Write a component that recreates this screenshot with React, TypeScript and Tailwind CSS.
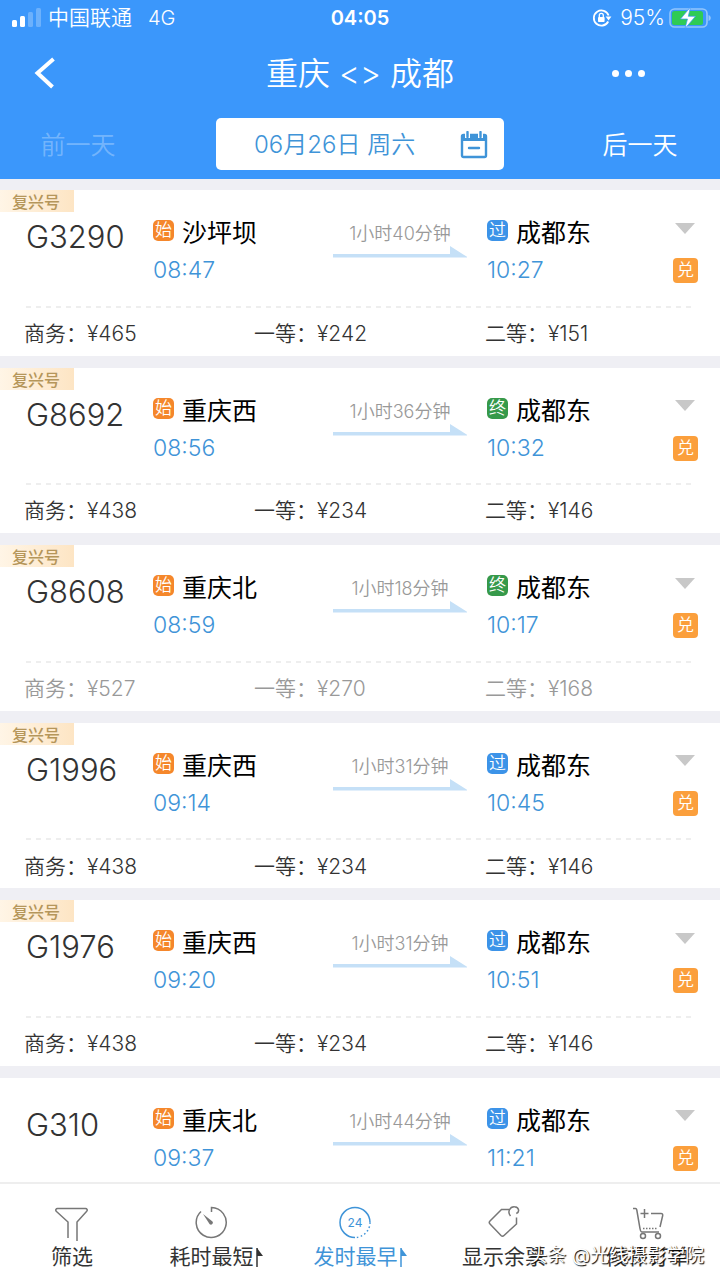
import React from 'react';

type StopKind = 'start' | 'pass' | 'end';

interface Train {
  no: string;
  from: string;
  depart: string;
  duration: string;
  to: string;
  toKind: StopKind;
  arrive: string;
  fuxing?: boolean;
  soldOut?: boolean;
  prices?: [string, string, string];
}

const trains: Train[] = [
  { no: 'G3290', from: '沙坪坝', depart: '08:47', duration: '1小时40分钟', to: '成都东', toKind: 'pass', arrive: '10:27', fuxing: true, prices: ['465', '242', '151'] },
  { no: 'G8692', from: '重庆西', depart: '08:56', duration: '1小时36分钟', to: '成都东', toKind: 'end', arrive: '10:32', fuxing: true, prices: ['438', '234', '146'] },
  { no: 'G8608', from: '重庆北', depart: '08:59', duration: '1小时18分钟', to: '成都东', toKind: 'end', arrive: '10:17', fuxing: true, soldOut: true, prices: ['527', '270', '168'] },
  { no: 'G1996', from: '重庆西', depart: '09:14', duration: '1小时31分钟', to: '成都东', toKind: 'pass', arrive: '10:45', fuxing: true, prices: ['438', '234', '146'] },
  { no: 'G1976', from: '重庆西', depart: '09:20', duration: '1小时31分钟', to: '成都东', toKind: 'pass', arrive: '10:51', fuxing: true, prices: ['438', '234', '146'] },
  { no: 'G310', from: '重庆北', depart: '09:37', duration: '1小时44分钟', to: '成都东', toKind: 'pass', arrive: '11:21' },
];

const seats = ['商务', '一等', '二等'];

const stopBadges = {
  start: { text: '始', color: 'bg-[#f5872b]' },
  pass: { text: '过', color: 'bg-[#3c93e8]' },
  end: { text: '终', color: 'bg-[#36994a]' },
};

const StatusBar: React.FC = () => (
  <div className="grid h-9 grid-cols-3 items-center px-3 text-xl">
    <div className="flex items-center">
      <svg width="30" height="20" viewBox="0 0 30 20" fill="#fff" aria-hidden="true">
        <rect x="0" y="12" width="5" height="7" rx="1.5" />
        <rect x="8" y="8" width="5" height="11" rx="1.5" />
        <rect x="16" y="4" width="5" height="15" rx="1.5" opacity=".25" />
        <rect x="24" y="0" width="5" height="19" rx="1.5" opacity=".25" />
      </svg>
      <span className="ml-1.5 text-[21px] font-[350]">中国联通</span>
      <span className="ml-4 font-[350]">4G</span>
    </div>
    <span className="text-center font-semibold">04:05</span>
    <div className="flex items-center justify-end">
      <svg width="20" height="20" viewBox="0 0 20 20" fill="none" stroke="#fff" strokeWidth="1.8" aria-hidden="true">
        <path d="M16.2 13.5A7.6 7.6 0 1 1 16.6 7.5" />
        <path d="M13.6 8.6h5.8l-2.8 4z" fill="#fff" stroke="none" />
        <rect x="6" y="9" width="6.600" height="5" rx=".8" fill="#fff" stroke="none" />
        <path d="M7.3 9V7.4a2 2 0 0 1 4 0V9" strokeWidth="1.3" />
      </svg>
      <span className="ml-2 text-[21px] font-[350]">95%</span>
      <svg className="ml-1 -mr-1" width="43" height="22" viewBox="0 0 43 22" aria-hidden="true">
        <rect x="1" y="2" width="37" height="18" rx="4.5" fill="none" stroke="#fff" strokeOpacity=".45" strokeWidth="1.6" />
        <path d="M39.5 8v6c3-.8 3-5.200 0-6z" fill="#fff" opacity=".45" />
        <rect x="3" y="4" width="31" height="14" rx="2.500" fill="#2fcb55" />
        <path d="M21.500 0 11.500 12h7L16 21.500 26.500 9.300h-7.200z" fill="#fff" stroke="#3b97fb" strokeWidth=".7" />
      </svg>
    </div>
  </div>
);

const StopBadge: React.FC<{ kind: StopKind }> = ({ kind }) => (
  <span className={`flex size-[21px] items-center justify-center rounded-[5px] text-[17px] leading-none font-[350] text-white ${stopBadges[kind].color}`}>
    {stopBadges[kind].text}
  </span>
);

const Stop: React.FC<{ kind: StopKind; name: string; time: string }> = ({ kind, name, time }) => (
  <div>
    <div className="flex items-start gap-2 pt-1.5">
      <StopBadge kind={kind} />
      <span className="text-[25px] leading-[26px] text-black">{name}</span>
    </div>
    <div className="pt-1.5 text-[23px] leading-9 font-[350] text-[#3f94d8]">{time}</div>
  </div>
);

const TrainCard: React.FC<{ train: Train }> = ({ train }) => (
  <li className={`relative flex flex-col bg-white ${train.prices ? 'flex-1' : 'h-[104px]'}`}>
    {train.fuxing && (
      <span className="absolute top-0 left-0 h-[22px] w-[74px] bg-linear-to-r from-[#fff5e6] to-[#fde5c4] pl-3 text-base leading-6 font-medium text-[#b5965a]">
        复兴号
      </span>
    )}
    <div className="grid grid-cols-[127fr_180fr_154fr_186fr_47fr] pt-6 pl-[26px]">
      <div className="text-[31px] leading-[46px] font-[350] text-[#333]">{train.no}</div>
      <Stop kind="start" name={train.from} time={train.depart} />
      <div className="pt-2">
        <div className="pr-5 text-center text-lg leading-6 font-[350] text-[#999]">{train.duration}</div>
        <svg className="block" width="134" height="12" viewBox="0 0 134 12" fill="#c5e0f7" aria-hidden="true">
          <path d="M0 8h117V0l18 11.500H0z" />
        </svg>
      </div>
      <Stop kind={train.toKind} name={train.to} time={train.arrive} />
      <div className="flex flex-col items-start">
        <button type="button" aria-label={`展开 ${train.no}`} className="flex h-7 w-6 items-center justify-center">
          <svg width="20" height="11" viewBox="0 0 20 11" fill="#c8c8c8">
            <path d="M0 0h20L10 11z" />
          </svg>
        </button>
        <span className="mt-4 flex size-[25px] items-center justify-center rounded-sm bg-[#fb9f3c] text-[17px] leading-none font-[350] text-white">兑</span>
      </div>
    </div>
    {train.prices && (
      <div className="mt-auto">
        <svg className="mx-6 block h-0.5 w-[calc(100%-48px)]" aria-hidden="true">
          <line x1="2" y1="1" x2="100%" y2="1" stroke="#e9e9e9" strokeWidth="1.500" strokeDasharray="5 5" />
        </svg>
        <div className={`grid h-12 grid-cols-[230fr_231fr_235fr] items-center pt-1 pl-6 text-[21px] font-[350] ${train.soldOut ? 'text-[#999]' : 'text-[#333]'}`}>
          {train.prices.map((price, i) => (
            <span key={seats[i]}>{seats[i]}：¥{price}</span>
          ))}
        </div>
      </div>
    )}
  </li>
);

/* Half arrow after a sortable tab */
const SortMark: React.FC = () => (
  <svg width="7" height="19" viewBox="0 0 7 19" aria-hidden="true">
    <path d="M1 0v19" stroke="currentColor" strokeWidth="1.500" />
    <path d="M1 0l6 8H1z" fill="currentColor" />
  </svg>
);

const tabs = [
  {
    label: '筛选',
    icon: (
      <path d="M13 33V17L1.500 6.500C0 5 1 3.500 2.500 3.500h28c1.500 0 2.500 1.500 1 3L22 17v19" />
    ),
  },
  {
    label: '耗时最短',
    sort: true,
    icon: (
      <>
        <path d="M17.500 7V2.500A15 15 0 1 1 7 6.500" />
        <path d="M9 9l9.500 7.500a2 2 0 0 1-2.800 2.800z" fill="currentColor" stroke="none" />
      </>
    ),
  },
  {
    label: '发时最早',
    sort: true,
    active: true,
    icon: (
      <>
        <path d="M17 32.500A15 15 0 1 1 32 17.500" />
        <path d="M32 17.500A15 15 0 0 1 17 32.500" strokeDasharray="1.500 2.500" />
        <text x="17" y="22" textAnchor="middle" fontSize="12" fill="currentColor" stroke="none">24</text>
      </>
    ),
  },
  {
    label: '显示余票',
    icon: (
      <>
        <path d="M22 4.500h-7.500L3 16q-1.500 1.500 0 3l11 11.500q1.500 1.500 3 0L29.500 19v-6.500" />
        <path d="M23.500 11C20 7 23 1.500 27.500 1.800c4.500.2 5.500 5.200 1.800 6.700" />
      </>
    ),
  },
  {
    label: '候补订单',
    icon: (
      <>
        <path d="M2 3.500h2.500q1 0 1.300 1.500L9 23.500q.5 3.500 2 3.500h17" />
        <path d="M20 8.500h10q2 0 1.700 2L29 22" />
        <path d="M13.500 4v9M9.500 8.500h8" />
        <path d="M12 23.500h15" strokeDasharray="1.500 1.500" />
        <circle cx="12" cy="31" r="2.500" />
        <circle cx="27" cy="31" r="2.500" />
      </>
    ),
  },
];

export default function App() {
  return (
    <div className="flex min-h-screen flex-col bg-[#efeff4] font-['Inter','Noto_Sans_CJK_SC',sans-serif]">
      <header className="bg-[#3b97fb] pb-[9px] text-white">
        <StatusBar />
        <div className="grid h-[74px] grid-cols-[120fr_480fr_120fr] items-center">
          <button type="button" aria-label="返回" className="flex h-12 items-center pl-[34px]">
            <svg width="22" height="32" viewBox="0 0 22 32" fill="none" stroke="#fff" strokeWidth="4">
              <path d="M19.500 2 3.500 16l15 14" />
            </svg>
          </button>
          <h1 className="pt-0.5 text-center text-[32px] font-[350]">重庆 &lt;&gt; 成都</h1>
          <button type="button" aria-label="更多" className="flex h-12 items-center gap-1.5 pl-3">
            <i className="size-[7px] rounded-full bg-white" />
            <i className="size-[7px] rounded-full bg-white" />
            <i className="size-[7px] rounded-full bg-white" />
          </button>
        </div>
        <div className="mt-2 grid h-[52px] grid-cols-[216fr_288fr_216fr] items-stretch text-[25px] font-[350]">
          <button type="button" disabled className="pt-1 pr-[60px] text-white/30">前一天</button>
          <button type="button" className="flex items-center justify-between rounded-[5px] bg-white pt-0.5 pr-4 pl-[38px] text-2xl font-[350] text-[#3f94d8]">
            <span>06月26日 周六</span>
            <svg width="28" height="28" viewBox="0 0 28 28" aria-hidden="true">
              <rect x="2" y="4" width="24" height="22" rx="1.500" fill="none" stroke="currentColor" strokeWidth="2.400" />
              <path d="M1 4h26v6H1z" fill="currentColor" />
              <path d="M7.500 0v7M20.500 0v7" stroke="#fff" strokeWidth="5" />
              <path d="M7.500 1v5M20.500 1v5M9 17h10" stroke="currentColor" strokeWidth="2.400" strokeLinecap="round" />
            </svg>
          </button>
          <button type="button" className="pt-1 pl-14">后一天</button>
        </div>
      </header>

      <ul className="flex flex-1 flex-col gap-3 pt-[11px]">
        {trains.map((train) => (
          <TrainCard key={train.no} train={train} />
        ))}
      </ul>

      <nav className="relative grid h-[98px] grid-cols-5 border-t-2 border-[#eeeeee] bg-white">
        {tabs.map((tab) => (
          <button
            key={tab.label}
            type="button"
            className={`flex flex-col items-center pt-[21px] whitespace-nowrap ${tab.active ? 'text-[#3f94d8]' : 'text-[#333]'}`}
          >
            <svg
              width="34"
              height="36"
              viewBox="0 0 34 36"
              fill="none"
              stroke="currentColor"
              strokeWidth="1.500"
              className={`${tab.active ? '' : 'text-[#777]'} ${tab.sort ? 'mr-2.5' : ''}`}
              aria-hidden="true"
            >
              {tab.icon}
            </svg>
            <span className="flex items-center gap-0.5 text-[21px] leading-8">
              {tab.label}
              {tab.sort && <SortMark />}
            </span>
          </button>
        ))}
        <span className="pointer-events-none absolute right-4 bottom-2 text-[19px] leading-8 whitespace-nowrap text-white [text-shadow:1px_1px_1px_#000]">
          头条 @光线摄影学院
        </span>
      </nav>
    </div>
  );
}
